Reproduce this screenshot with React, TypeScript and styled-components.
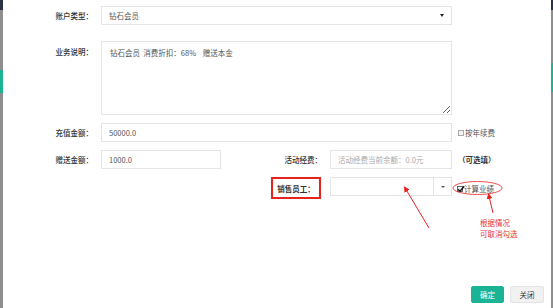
import React from 'react';
import styled, { createGlobalStyle } from 'styled-components';

const Global = createGlobalStyle`
  html, body { margin: 0; padding: 0; background: #fff; }
  body {
    width: 553px; height: 308px; overflow: hidden;
    font-family: "Noto Sans CJK SC", "Noto Sans", sans-serif;
    font-size: 7.5px; color: #333;
  }
  * { box-sizing: border-box; }
`;

const Page = styled.div`
  position: relative;
  display: flex;
  width: 553px;
  height: 308px;
`;

const Edge = styled.div<{ $w: number; $g1: number; $g2: number }>`
  flex: none;
  width: ${(p) => p.$w}px;
  background: linear-gradient(
    to bottom,
    #2b3444 0, #2b3444 10px,
    #8e8e8e 10px, #8e8e8e ${(p) => p.$g1}px,
    #1ab394 ${(p) => p.$g1}px, #1ab394 ${(p) => p.$g2}px,
    #8e8e8e ${(p) => p.$g2}px, #8e8e8e 100%
  );
`;

const Main = styled.div`
  flex: 1;
  display: flex;
  flex-direction: column;
  padding-top: 6px;
`;

const Row = styled.div<{ $mt?: number; $top?: boolean }>`
  display: flex;
  align-items: ${(p) => (p.$top ? 'flex-start' : 'center')};
  margin-top: ${(p) => p.$mt ?? 0}px;
`;

const Label = styled.div<{ $w: number; $mt?: number }>`
  flex: none;
  width: ${(p) => p.$w}px;
  margin-right: 8px;
  margin-top: ${(p) => p.$mt ?? 0}px;
  text-align: right;
  color: #333;
  font-weight: 500;
  white-space: nowrap;
`;

const Spacer = styled.div<{ $w: number }>`
  flex: none;
  width: ${(p) => p.$w}px;
`;

const fieldBase = `
  height: 19px;
  border: 1px solid #e3e4e6;
  background: #fff;
  font-family: inherit;
  font-size: 7.5px;
  color: #555;
  outline: none;
`;

const Input = styled.input<{ $w: number }>`
  ${fieldBase}
  flex: none;
  width: ${(p) => p.$w}px;
  padding: 0 7px;
  &::placeholder { color: #aaa; }
`;

const SelectBox = styled.div<{ $w: number }>`
  ${fieldBase}
  flex: none;
  position: relative;
  display: flex;
  align-items: center;
  width: ${(p) => p.$w}px;
  padding: 0 7px;
`;

const Caret = styled.span`
  margin-left: auto;
  width: 0;
  height: 0;
  border-left: 2.5px solid transparent;
  border-right: 2.5px solid transparent;
  border-top: 3.5px solid #222;
`;

const ComboBox = styled.div<{ $w: number }>`
  ${fieldBase}
  flex: none;
  display: flex;
  width: ${(p) => p.$w}px;
`;

const ComboText = styled.div`
  flex: 1;
`;

const ComboButton = styled.div`
  flex: none;
  width: 18px;
  border-left: 1px solid #e3e4e6;
  display: flex;
  align-items: center;
  justify-content: center;
`;

const SmallCaret = styled.span`
  width: 0;
  height: 0;
  border-left: 2px solid transparent;
  border-right: 2px solid transparent;
  border-top: 2.5px solid #555;
`;

const TextArea = styled.textarea`
  ${fieldBase}
  flex: none;
  width: 351px;
  height: 74px;
  padding: 5px 8px;
  line-height: 11px;
  resize: vertical;
`;

const CheckLabel = styled.label<{ $ml: number; $mt?: number }>`
  display: flex;
  align-items: center;
  margin-left: ${(p) => p.$ml}px;
  margin-top: ${(p) => p.$mt ?? 0}px;
  color: #555;
  white-space: nowrap;
`;

const Box = styled.span<{ $checked?: boolean }>`
  position: relative;
  flex: none;
  width: 6px;
  height: 6px;
  margin-right: 1px;
  border: 1px solid ${(p) => (p.$checked ? '#666' : '#aaa')};
  background: #f3f3f3;
  svg { position: absolute; left: -1px; top: -2px; }
`;

const Hint = styled.div`
  margin-left: 6px;
  font-weight: bold;
  color: #333;
  white-space: nowrap;
`;

const HighlightWrap = styled.div`
  flex: none;
  width: 101px;
  display: flex;
  justify-content: flex-end;
  padding-right: 1px;
  margin-right: 8px;
`;

const RedBox = styled.div`
  width: 50px;
  height: 22px;
  border: 2px solid #e8231f;
  display: flex;
  align-items: center;
  justify-content: center;
  font-weight: bold;
  color: #333;
`;

const Footer = styled.div`
  margin-top: auto;
  display: flex;
  justify-content: flex-end;
  gap: 6px;
  padding: 0 7px 5px 0;
`;

const Button = styled.button<{ $primary?: boolean; $w: number }>`
  width: ${(p) => p.$w}px;
  height: 17px;
  padding: 0;
  font-family: inherit;
  font-size: 7.5px;
  border: 1px solid ${(p) => (p.$primary ? '#1ab394' : '#e4e4e4')};
  background: ${(p) => (p.$primary ? '#1ab394' : '#f1f1f1')};
  color: ${(p) => (p.$primary ? '#fff' : '#333')};
  border-radius: 2px;
`;

const Overlay = styled.svg`
  position: absolute;
  left: 0;
  top: 0;
  pointer-events: none;
`;

const Note = styled.div`
  position: absolute;
  left: 480px;
  top: 217px;
  color: #e8322e;
  line-height: 11px;
  white-space: nowrap;
`;

const Check = ({ checked }: { checked?: boolean }) => (
  <Box $checked={checked}>
    {checked && (
      <svg width="8" height="8" viewBox="0 0 8 8">
        <path d="M1 4.2 L3 6.2 L7.2 1.2" fill="none" stroke="#111" strokeWidth="1.4" />
      </svg>
    )}
  </Box>
);

export default function App() {
  return (
    <>
      <Global />
      <Page>
        <Edge $w={3} $g1={70} $g2={93} />
        <Main>
          <Row>
            <Label $w={90}>账户类型：</Label>
            <SelectBox $w={351}>
              钻石会员
              <Caret />
            </SelectBox>
          </Row>
          <Row $mt={16} $top>
            <Label $w={90} $mt={5}>业务说明：</Label>
            <TextArea readOnly defaultValue={'钻石会员  消费折扣：68%    赠送本金'} />
          </Row>
          <Row $mt={8}>
            <Label $w={90}>充值金额：</Label>
            <Input $w={351} readOnly value="50000.0" />
            <CheckLabel $ml={6}>
              <Check />
              按年续费
            </CheckLabel>
          </Row>
          <Row $mt={8}>
            <Label $w={90}>赠送金额：</Label>
            <Input $w={120} readOnly value="1000.0" />
            <Label $w={101}>活动经费：</Label>
            <Input $w={122} readOnly placeholder="活动经费当前余额：0.0元" />
            <Hint>（可选填）</Hint>
          </Row>
          <Row $mt={8} $top>
            <Spacer $w={98} />
            <Spacer $w={120} />
            <HighlightWrap>
              <RedBox>销售员工：</RedBox>
            </HighlightWrap>
            <ComboBox $w={122}>
              <ComboText />
              <ComboButton>
                <SmallCaret />
              </ComboButton>
            </ComboBox>
            <CheckLabel $ml={5} $mt={6}>
              <Check checked />
              计算业绩
            </CheckLabel>
          </Row>
          <Footer>
            <Button $primary $w={33}>确定</Button>
            <Button $w={34}>关闭</Button>
          </Footer>
        </Main>
        <Edge $w={2} $g1={63} $g2={92} />
        <Overlay width="553" height="308" viewBox="0 0 553 308">
          <defs>
            <marker id="ah" markerWidth="6" markerHeight="6" refX="5" refY="3" orient="auto" markerUnits="userSpaceOnUse">
              <path d="M0 0 L6 3 L0 6 Z" fill="#e8231f" />
            </marker>
          </defs>
          <ellipse cx="477.5" cy="188" rx="24.5" ry="6.5" fill="none" stroke="#e8231f" strokeWidth="0.8" />
          <line x1="429" y1="228" x2="404.5" y2="187" stroke="#e8231f" strokeWidth="1" markerEnd="url(#ah)" />
          <line x1="493" y1="213" x2="488.5" y2="194" stroke="#e8231f" strokeWidth="1" markerEnd="url(#ah)" />
        </Overlay>
        <Note>
          根据情况
          <br />
          可取消勾选
        </Note>
      </Page>
    </>
  );
}
